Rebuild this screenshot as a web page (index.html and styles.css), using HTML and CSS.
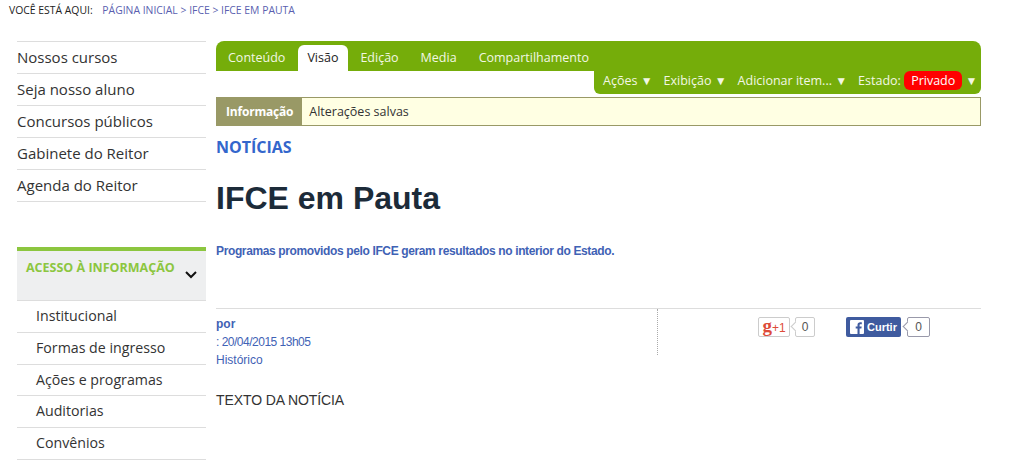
FILE: index.html
```html
<!DOCTYPE html>
<html lang="pt-BR">
<head>
    <meta charset="UTF-8">
    <title>IFCE em Pauta</title>
    <link rel="stylesheet" href="styles.css">
</head>
<body>
    <div class="breadcrumb">
        <span class="here">VOCÊ ESTÁ AQUI:</span>
        <a href="#">PÁGINA INICIAL</a> &gt; <a href="#">IFCE</a> &gt; <a href="#">IFCE EM PAUTA</a>
    </div>

    <div class="page">
        <div class="sidebar">
            <ul class="side-menu">
                <li>Nossos cursos</li>
                <li>Seja nosso aluno</li>
                <li>Concursos públicos</li>
                <li>Gabinete do Reitor</li>
                <li>Agenda do Reitor</li>
            </ul>

            <div class="side-head">
                <span>ACESSO À INFORMAÇÃO</span>
                <svg class="chevron" width="14" height="9" viewBox="0 0 14 9"><path d="M2 2l5 5 5-5" fill="none" stroke="#111" stroke-width="2"/></svg>
            </div>
            <ul class="side-sub">
                <li>Institucional</li>
                <li>Formas de ingresso</li>
                <li>Ações e programas</li>
                <li>Auditorias</li>
                <li>Convênios</li>
            </ul>
        </div>

        <div class="main">
            <div class="toolbar">
                <div class="tabs">
                    <a class="tab" href="#">Conteúdo</a>
                    <a class="tab active" href="#">Visão</a>
                    <a class="tab" href="#">Edição</a>
                    <a class="tab" href="#">Media</a>
                    <a class="tab" href="#">Compartilhamento</a>
                </div>
                <div class="actions">
                    <span>Ações <i class="arrow">▼</i></span>
                    <span>Exibição <i class="arrow">▼</i></span>
                    <span>Adicionar item... <i class="arrow">▼</i></span>
                    <span class="state">Estado: <b class="private">Privado</b> <i class="arrow">▼</i></span>
                </div>
            </div>

            <div class="message">
                <strong>Informação</strong>
                <span>Alterações salvas</span>
            </div>

            <div class="section-title">NOTÍCIAS</div>
            <h1>IFCE em Pauta</h1>
            <p class="lead">Programas promovidos pelo IFCE geram resultados no interior do Estado.</p>

            <div class="meta">
                <div class="meta-info">
                    <div class="author">por</div>
                    <div class="date">: 20/04/2015 13h05</div>
                    <div>Histórico</div>
                </div>
                <div class="share">
                    <div class="gplus">
                        <span class="gplus-btn"><span class="g">g</span>+1</span>
                        <span class="count">0</span>
                    </div>
                    <div class="fb">
                        <span class="fb-btn">
                            <svg width="14" height="14" viewBox="0 0 14 14"><path d="M1 0h12a1 1 0 0 1 1 1v12a1 1 0 0 1-1 1H9.6V8.6h1.8l.3-2.1H9.6V5.2c0-.6.2-1 1-1h1.2V2.300c-.3 0-.9-.1-1.600-.1-1.600 0-2.700 1-2.700 2.800v1.500H5.700v2.100h1.800V14H1a1 1 0 0 1-1-1V1a1 1 0 0 1 1-1z" fill="#fff"/></svg>
                            Curtir
                        </span>
                        <span class="count dark">0</span>
                    </div>
                </div>
            </div>

            <p class="body-text">TEXTO DA NOTÍCIA</p>
        </div>
    </div>
</body>
</html>
```

FILE: styles.css
```css
html, body {
    margin: 0;
    padding: 0;
    background: #fff;
    overflow: hidden;
}
body {
    font-family: "Open Sans", sans-serif;
    color: #333;
    height: 463px;
}
a {
    color: inherit;
    text-decoration: none;
}
ul {
    list-style: none;
    margin: 0;
    padding: 0;
}
.breadcrumb {
    height: 41px;
    box-sizing: border-box;
    padding: 3px 0 0 9px;
    font-size: 10.4px;
    line-height: 14px;
    color: #5a5fb0;
    white-space: nowrap;
}
.here {
    color: #222;
    margin-right: 7px;
}
.page {
    display: flex;
}
.sidebar {
    width: 189px;
    margin-left: 17px;
    flex: none;
}
.side-menu {
    border-top: 1px solid #ddd;
}
.side-menu li {
    height: 31px;
    line-height: 31px;
    border-bottom: 1px solid #ddd;
    font-size: 15px;
}
.side-head {
    margin-top: 45px;
    height: 41px;
    background: #eeeff0;
    border-top: 4px solid #8cc63f;
    border-bottom: 1px solid #ddd;
    padding: 8px 0 0 9px;
    display: flex;
    align-items: flex-start;
    font-size: 12.5px;
    font-weight: 700;
    color: #8cc63f;
    line-height: 18px;
    white-space: nowrap;
}
.chevron {
    margin: 11px 8px 0 auto;
}
.side-sub li {
    height: 30.8px;
    line-height: 30px;
    border-bottom: 1px solid #ddd;
    padding-left: 19px;
    font-size: 14.2px;
}
.main {
    width: 765px;
    margin-left: 10px;
    flex: none;
}
.toolbar {
    height: 53px;
    background: linear-gradient(#75ad0a 30px, transparent 30px);
    border-radius: 8px 8px 0 0;
    font-size: 12.5px;
    color: #f2f7e4;
}
.tabs {
    display: flex;
    height: 30px;
    padding: 4px 0 0 1px;
    box-sizing: border-box;
}
.tab {
    padding: 0 11px;
    line-height: 25px;
}
.tab.active {
    background: #fff;
    color: #222;
    border-radius: 6px 6px 0 0;
    padding: 0 10px 0 9px;
    margin: 0 1px 0 2px;
}
.actions {
    width: 387px;
    height: 23px;
    margin-left: auto;
    box-sizing: border-box;
    background: #75ad0a;
    border-radius: 0 0 6px 6px;
    display: flex;
    gap: 11px;
    padding-left: 9px;
    line-height: 19px;
    white-space: nowrap;
}
.arrow {
    font-style: normal;
    font-size: 12px;
}
.state .private {
    font-weight: 400;
    color: #fff;
    background: #f00;
    border-radius: 6px;
    padding: 1px 7px;
}
.message {
    margin-top: 3px;
    height: 29px;
    box-sizing: border-box;
    display: flex;
    background: #ffffe3;
    border: 1px solid #999966;
    font-size: 12.5px;
    line-height: 27px;
}
.message strong {
    background: #999966;
    color: #fff;
    padding: 0 9px;
    font-size: 12px;
    letter-spacing: -0.2px;
    margin-right: 7px;
}
.section-title {
    margin-top: 10px;
    font-size: 16px;
    font-weight: 700;
    line-height: 22px;
    color: #3366cc;
}
h1 {
    margin: 22px 0 0;
    font-family: "Liberation Sans", Arial, sans-serif;
    font-size: 32px;
    font-weight: 700;
    line-height: 36px;
    color: #1c2b39;
}
.lead {
    margin: 27px 0 0;
    font-family: "Liberation Sans", Arial, sans-serif;
    font-size: 12px;
    font-weight: 700;
    line-height: 16px;
    letter-spacing: -0.37px;
    color: #3f62b5;
}
.meta {
    margin-top: 49px;
    border-top: 1px solid #ddd;
    display: flex;
    height: 46px;
    font-family: "Liberation Sans", Arial, sans-serif;
    font-size: 12px;
    line-height: 18px;
    color: #3f62b5;
}
.meta-info {
    width: 441px;
    padding-top: 6px;
    border-right: 1px dotted #aaa;
}
.author {
    font-weight: 700;
}
.date {
    letter-spacing: -0.5px;
}
.share {
    display: flex;
    padding: 8px 0 0 100px;
}
.gplus, .fb {
    display: flex;
    align-items: flex-start;
    gap: 5px;
}
.gplus {
    width: 88px;
}
.gplus-btn {
    height: 20px;
    width: 32px;
    box-sizing: border-box;
    border: 1px solid #ccc;
    border-radius: 2px;
    color: #dd4b39;
    font-size: 12px;
    line-height: 15px;
    text-align: center;
    white-space: nowrap;
}
.g {
    font-family: "Liberation Serif", serif;
    font-size: 19px;
    font-weight: 700;
}
.count {
    height: 20px;
    width: 20px;
    box-sizing: border-box;
    border: 1px solid #ccc;
    border-radius: 2px;
    background: #fff;
    color: #555;
    font-size: 12px;
    line-height: 18px;
    text-align: center;
    position: relative;
}
.count::before {
    content: "";
    position: absolute;
    left: -4px;
    top: 5px;
    width: 6px;
    height: 6px;
    background: #fff;
    border-left: 1px solid #ccc;
    border-bottom: 1px solid #ccc;
    transform: rotate(45deg);
}
.count.dark {
    width: 23px;
    margin-left: 1px;
    border-color: #99a;
}
.count.dark::before {
    border-color: #99a;
}
.fb-btn {
    height: 20px;
    width: 55px;
    box-sizing: border-box;
    display: flex;
    align-items: center;
    gap: 3px;
    padding-left: 4px;
    background: #3f5b9f;
    border-radius: 2px;
    color: #fff;
    font-size: 11px;
    font-weight: 700;
}
.body-text {
    margin: 36px 0 0;
    font-family: "Liberation Sans", Arial, sans-serif;
    font-size: 14px;
    line-height: 18px;
    letter-spacing: -0.1px;
    color: #333;
}
```
